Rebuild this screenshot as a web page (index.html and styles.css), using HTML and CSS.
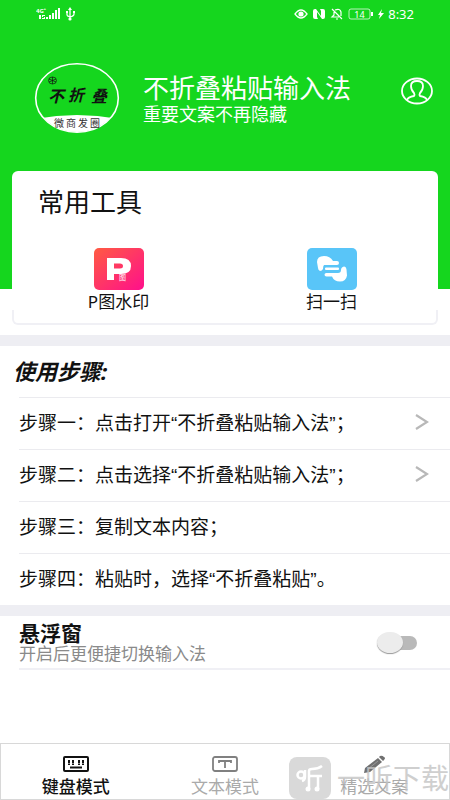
FILE: index.html
```html
<!DOCTYPE html>
<html lang="zh-CN">
<head>
<meta charset="utf-8">
<meta name="viewport" content="width=device-width, initial-scale=1">
<title>不折叠粘贴输入法</title>
<link rel="stylesheet" href="styles.css">
</head>
<body>
<div class="app">
  <header class="hero">
    <div class="status">
      <svg class="signal" width="40" height="14" viewBox="0 0 40 14" fill="#fff" aria-hidden="true">
        <text x="0" y="6" class="net">4G⁺</text>
        <path d="M3 8h2v4H3zM6 8h3v1H7v1h2v2H6v-1h2v-1H6zM10 10h2v2h-2zM13 8h2v4h-2zM16 6h2v6h-2zM19 3h2v9h-2zM22 1h2v11h-2z"/>
        <path d="M34 2v10M31 5v3q0 1 3 2q4-1 4-3V5" fill="none" stroke="#fff" stroke-width="1.3"/>
        <path d="M34 0l2 3h-4zM30 4h2v2h-2zM37 4h2v2h-2z"/><circle cx="34" cy="12" r="1.6"/>
      </svg>
      <div class="status-right">
        <svg width="14" height="12" viewBox="0 0 14 12" fill="none" stroke="#fff" aria-hidden="true"><path d="M1 6q6-8 12 0q-6 8-12 0z" stroke-width="1.3"/><circle cx="7" cy="6" r="2.6" fill="#fff" stroke="none"/></svg>
        <svg width="14" height="12" viewBox="0 0 14 12" aria-hidden="true"><path d="M1 3q0-2 2-2h1l5 7V3L8 1h3q2 0 2 2v6q0 2-2 2h-1L5 4v5l1 2H3q-2 0-2-2z" fill="#fff"/></svg>
        <svg width="14" height="12" viewBox="0 0 14 12" fill="none" stroke="#fff" stroke-width="1.2" aria-hidden="true"><path d="M2 1l10 10M4 4v3L2 9h7M5 2q5-2 6 2v4M6 11h2"/></svg>
        <svg width="26" height="12" viewBox="0 0 26 12" aria-hidden="true"><rect x="1" y="1" width="21" height="10" rx="2" fill="none" stroke="#fff" stroke-opacity=".7"/><path d="M23 4h2v4h-2z" fill="#fff"/><text x="11.5" y="9.5" text-anchor="middle" class="charge">14</text></svg>
        <svg width="6" height="10" viewBox="0 0 6 10" fill="#fff" aria-hidden="true"><path d="M4 0L0 6h2L1 10l5-6H3z"/></svg>
        <span class="time">8:32</span>
      </div>
    </div>
    <div class="profile">
      <svg class="logo" width="86" height="72" viewBox="0 0 86 72" role="img" aria-label="不折叠 微商发圈">
        <defs><clipPath id="oval"><ellipse cx="43" cy="36" rx="41" ry="34"/></clipPath></defs>
        <path d="M0 57Q43 49 86 57V72H0z" fill="#fff" clip-path="url(#oval)"/>
        <ellipse cx="43" cy="36" rx="41.3" ry="34.3" fill="none" stroke="#fff" stroke-width="1.6"/>
        <g fill="none" stroke="#111" stroke-width=".7"><ellipse cx="18.5" cy="18.5" rx="4" ry="3.5"/><path d="M15 17l7 3M22 17l-7 3M18.5 15v7"/></g>
        <text class="brush" y="40"><tspan x="14">不</tspan><tspan x="34" y="39">折</tspan><tspan x="57" y="40">叠</tspan></text>
        <text class="logo-sub" y="65"><tspan x="20">微</tspan><tspan x="32">商</tspan><tspan x="44">发</tspan><tspan x="56">圈</tspan></text>
      </svg>
      <div class="intro">
        <h1>不折叠粘贴输入法</h1>
        <p>重要文案不再隐藏</p>
      </div>
      <button class="user" aria-label="个人中心">
        <svg width="34" height="28" viewBox="0 0 34 28" fill="none" stroke="#fff" stroke-width="1.8" aria-hidden="true"><ellipse cx="17" cy="14" rx="15" ry="12.5"/><path d="M7 23q1-3 7-4q1-1 0-3q-3-3-3-7q0-5 6-5t6 5q0 4-3 7q-1 2 0 3q6 1 7 4"/></svg>
      </button>
    </div>
    <section class="card">
      <h2>常用工具</h2>
      <div class="tools">
        <a class="tool" href="#watermark">
          <svg width="50" height="42" viewBox="0 0 50 42" aria-hidden="true">
            <defs><linearGradient id="pink" x1="0" y1="0" x2="1" y2="1"><stop offset="0" stop-color="#ff5b42"/><stop offset="1" stop-color="#ff0f8c"/></linearGradient></defs>
            <rect width="50" height="42" rx="5" fill="url(#pink)"/>
            <path d="M13 10h14q10 0 10 8t-10 8h-7v6h-7zM20 15.500v5h6q3 0 3-2.500t-3-2.500z" fill="#fff" fill-rule="evenodd"/>
            <text x="25" y="32" class="mini">图</text>
          </svg>
          <span>P图水印</span>
        </a>
        <a class="tool" href="#scan">
          <svg width="50" height="42" viewBox="0 0 50 42" aria-hidden="true">
            <rect width="50" height="42" rx="5" fill="#59c5f8"/>
            <g fill="#fff"><path d="M10 14q0-6 7-6q6 0 9 5h4q2 0 2 2t-2 2H17q-1 1-1 4q-1 2-3 2q-2-1-2-3z"/><path d="M19.500 25H31q3 0 3-3q0-3 3-3.500q2 0 2.500 3l.5 6q-1 6-7 6q-6 0-8-5h-5.500q-2 0-2-1.800t2-1.700z"/><rect x="18" y="19.500" width="14" height="2.500" rx="1"/></g>
          </svg>
          <span>扫一扫</span>
        </a>
      </div>
    </section>
  </header>

  <main>
    <section class="block">
      <h2 class="steps-title">使用步骤:</h2>
      <ol class="steps">
        <li><a href="#open">步骤一：点击打开“不折叠粘贴输入法”；<svg width="14" height="18" viewBox="0 0 14 18" fill="none" stroke="#b8b8b8" stroke-width="2.2" aria-hidden="true"><path d="M1 2l11 7L1 16"/></svg></a></li>
        <li><a href="#choose">步骤二：点击选择“不折叠粘贴输入法”；<svg width="14" height="18" viewBox="0 0 14 18" fill="none" stroke="#b8b8b8" stroke-width="2.2" aria-hidden="true"><path d="M1 2l11 7L1 16"/></svg></a></li>
        <li>步骤三：复制文本内容；</li>
        <li>步骤四：粘贴时，选择“不折叠粘贴”。</li>
      </ol>
    </section>
    <section class="block">
      <div class="float-row">
        <label for="float"><strong>悬浮窗</strong><small>开启后更便捷切换输入法</small></label>
        <input class="switch" id="float" type="checkbox" role="switch">
      </div>
    </section>
  </main>

  <nav class="tabs">
    <a class="tab active" href="#keyboard" aria-current="page">
      <svg width="28" height="18" viewBox="0 0 28 18" fill="none" stroke="#111" stroke-width="2" aria-hidden="true"><rect x="2" y="2" width="24" height="14" rx="1"/><path d="M7 5v5M11 5v5M17 5v5M21 5v5" stroke-width="2" stroke-dasharray="3 .5"/><path d="M8 12.500h12"/></svg>
      <span>键盘模式</span>
    </a>
    <a class="tab" href="#text">
      <svg width="28" height="18" viewBox="0 0 28 18" fill="none" stroke="#808080" stroke-width="1.8" aria-hidden="true"><rect x="2" y="2" width="24" height="14" rx="2"/><path d="M8 8V6h12v2M14 6v7"/></svg>
      <span>文本模式</span>
    </a>
    <a class="tab" href="#copy">
      <svg width="28" height="18" viewBox="0 0 28 18" fill="#707070" aria-hidden="true"><path d="M19 2l1-1q2-1 4 1q2 1 0 3l-1 1zM18 3l4 4L10 17l-6 1 1-5z"/><path d="M8 14L18 6" stroke="#999"/></svg>
      <span>精选文案</span>
    </a>
    <div class="mark">
      <svg width="42" height="42" viewBox="0 0 42 42" aria-hidden="true"><rect width="42" height="42" rx="8" fill="#d0d0d0"/><g fill="none" stroke="#fff" stroke-width="2.5"><circle cx="12" cy="18" r="3.5"/><path d="M16 13v7q0 3-3 4M20 32V14q0-2 3-2q6 0 10-3M20 19h13M29 19v13"/></g><circle cx="19" cy="32" r="2.5" fill="#fff"/><circle cx="28" cy="32" r="2.5" fill="#fff"/></svg>
      <span>一听下载</span>
    </div>
  </nav>
</div>
</body>
</html>
```
FILE: styles.css
```css
* {
  box-sizing: border-box;
}

body {
  margin: 0;
  background: #fff;
  color: #111;
  font-family: "Noto Sans", "Noto Sans CJK SC", sans-serif;
}

h1,
h2,
p,
ol {
  margin: 0;
  padding: 0;
  font-weight: 400;
}

a {
  color: inherit;
  text-decoration: none;
}

svg {
  display: block;
  flex: none;
}

.app {
  display: flex;
  flex-direction: column;
  min-height: 100vh;
}

.hero {
  padding: 0 12px 10px;
  background: linear-gradient(#15d61e, #15d61e) no-repeat 0 0 / 100% 289px;
}

.status {
  display: flex;
  align-items: center;
  justify-content: space-between;
  height: 28px;
  padding: 0 24px;
  color: #fff;
}

.status-right {
  display: flex;
  align-items: center;
  gap: 4px;
}

.time {
  font-size: 13px;
  line-height: 16px;
}

.net {
  font-size: 6px;
  font-weight: 700;
}

.charge {
  fill: #fff;
  font-size: 9px;
}

.profile {
  display: flex;
  align-items: center;
  height: 143px;
  padding: 0 4px 3px 22px;
}

.intro {
  flex: 1;
  padding: 4px 0 0 23px;
  color: #fff;
  white-space: nowrap;
}

.intro h1 {
  font-size: 26px;
  line-height: 28px;
}

.intro p {
  font-size: 18px;
  line-height: 24px;
}

.user {
  align-self: flex-start;
  margin-top: 49px;
  padding: 0;
  border: 0;
  background: none;
}

.brush {
  fill: #111;
  font-size: 16px;
  font-weight: 700;
  font-style: italic;
}

.logo-sub {
  fill: #333;
  font-size: 10px;
}

.card {
  position: relative;
  height: 154px;
  border-radius: 6px;
  background: #fff;
}

.card::after {
  content: "";
  position: absolute;
  inset: auto 0 0;
  height: 13px;
  border: 2px solid #f0f0f5;
  border-top: 0;
  border-radius: 0 0 6px 6px;
}

.card h2 {
  padding: 14px 26px 0;
  font-size: 26px;
  line-height: 34px;
}

.tools {
  display: grid;
  grid-template-columns: 1fr 1fr;
  padding-top: 29px;
}

.tool {
  display: flex;
  flex-direction: column;
  align-items: center;
  font-size: 17px;
  line-height: 24px;
}

.mini {
  fill: #fff;
  font-size: 7px;
}

.block {
  border-top: 11px solid #eeeef3;
}

.steps-title {
  padding-left: 13px;
  font-size: 22px;
  font-style: italic;
  font-weight: 700;
  line-height: 51px;
}

.steps {
  list-style: none;
  font-family: "Liberation Sans", "Noto Sans CJK SC", sans-serif;
  font-size: 19px;
  line-height: 51px;
  white-space: nowrap;
}

.steps li {
  margin-left: 19px;
  border-top: 1px solid #ebebef;
}

.steps a {
  display: flex;
  align-items: center;
  justify-content: space-between;
  padding-right: 21px;
}

.steps svg {
  margin-bottom: 4px;
}

.float-row {
  display: flex;
  align-items: center;
  justify-content: space-between;
  margin-left: 19px;
  padding: 6px 33px 4px 0;
  border-bottom: 2px solid #f0f0f5;
}

.float-row strong,
.float-row small {
  display: block;
}

.float-row strong {
  font-size: 21px;
  line-height: 22px;
}

.float-row small {
  color: #8a8a8a;
  font-size: 17px;
  line-height: 20px;
}

.switch {
  position: relative;
  width: 36px;
  height: 14px;
  margin: 0;
  border-radius: 7px;
  background: #b9b9b9;
  appearance: none;
}

.switch::before {
  content: "";
  position: absolute;
  top: -4px;
  left: -4px;
  width: 26px;
  height: 21px;
  border-radius: 50%;
  background: #ececec;
  box-shadow: 0 1px 1px #999;
}

.switch:checked::before {
  left: 14px;
}

.tabs {
  position: relative;
  display: grid;
  grid-template-columns: repeat(3, 1fr);
  height: 57px;
  margin-top: auto;
  border: 1px solid #d8d8d8;
}

.tab {
  display: flex;
  flex-direction: column;
  align-items: center;
  gap: 2px;
  padding-top: 11px;
  color: #aaa;
  font-size: 17px;
  line-height: 24px;
}

.active {
  color: #111;
  font-weight: 500;
}

.mark {
  position: absolute;
  right: 0;
  bottom: 0;
  display: flex;
  align-items: center;
  gap: 6px;
  color: #c4c4c4;
  font-size: 28px;
  line-height: 42px;
  opacity: 0.8;
  pointer-events: none;
}
```
